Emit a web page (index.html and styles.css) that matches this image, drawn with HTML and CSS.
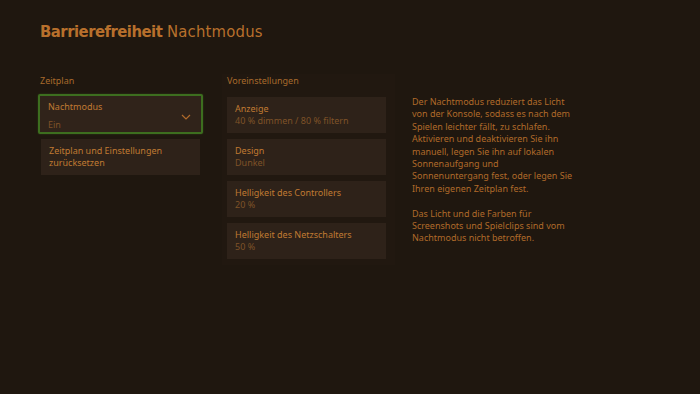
FILE: index.html
```html
<!DOCTYPE html>
<html lang="de">
<head>
<meta charset="utf-8">
<link rel="stylesheet" href="styles.css">
</head>
<body>
<div class="page">
  <h1 class="title"><span class="strong">Barrierefreiheit</span> <span class="light">Nachtmodus</span></h1>
  <div class="columns">
    <section class="col col-left">
      <div class="label">Zeitplan</div>
      <div class="dropdown">
        <div class="texts">
          <div class="item-title">Nachtmodus</div>
          <div class="item-sub">Ein</div>
        </div>
        <svg class="chev" width="10" height="6" viewBox="0 0 10 6"><path d="M1 1 L5 5 L9 1" fill="none" stroke="#b06a2a" stroke-width="1.2"/></svg>
      </div>
      <div class="card card-left">
        <div class="item-title">Zeitplan und Einstellungen<br>zurücksetzen</div>
      </div>
    </section>
    <section class="col col-mid">
      <div class="label">Voreinstellungen</div>
      <div class="panel">
        <div class="card"><div class="item-title">Anzeige</div><div class="item-sub">40 % dimmen / 80 % filtern</div></div>
        <div class="card"><div class="item-title">Design</div><div class="item-sub">Dunkel</div></div>
        <div class="card"><div class="item-title">Helligkeit des Controllers</div><div class="item-sub">20 %</div></div>
        <div class="card"><div class="item-title">Helligkeit des Netzschalters</div><div class="item-sub">50 %</div></div>
      </div>
    </section>
    <section class="col col-right">
      <p>Der Nachtmodus reduziert das Licht von der Konsole, sodass es nach dem Spielen leichter fällt, zu schlafen. Aktivieren und deaktivieren Sie ihn manuell, legen Sie ihn auf lokalen Sonnenaufgang und Sonnenuntergang fest, oder legen Sie Ihren eigenen Zeitplan fest.</p>
      <p>Das Licht und die Farben für Screenshots und Spielclips sind vom Nachtmodus nicht betroffen.</p>
    </section>
  </div>
</div>
</body>
</html>
```
FILE: styles.css
```css
html, body {
  margin: 0;
  padding: 0;
  background: #1f170f;
  width: 700px;
  height: 394px;
  overflow: hidden;
}
.page {
  padding: 20px 0 0 40px;
  font-family: "Noto Sans", "Open Sans", sans-serif;
  color: #b06a2a;
}
.title {
  margin: 0;
  font-family: "DejaVu Sans Condensed", "DejaVu Sans", sans-serif;
  font-size: 16.5px;
  font-weight: normal;
  line-height: 24px;
  color: #b8702c;
}
.title .strong { font-weight: bold; letter-spacing: -0.5px; }
.title .light { letter-spacing: 0.2px; }
.columns {
  display: flex;
  margin-top: 30px;
}
.col-left {
  width: 165px;
  margin-left: -2px;
}
.label {
  font-size: 9px;
  line-height: 14px;
  color: #a86a2c;
  padding-left: 2px;
  margin-bottom: 6px;
}
.dropdown {
  border: 2px solid #3d6e1f;
  border-radius: 2px;
  background: #30231a;
  display: flex;
  align-items: flex-start;
  justify-content: space-between;
  padding: 5px 10px 0 8px;
  box-sizing: content-box;
  height: 31px;
  box-shadow: 0 0 2px rgba(80,140,40,0.4);
}
.texts { display: flex; flex-direction: column; }
.item-title {
  font-size: 9px;
  line-height: 12px;
  color: #c07a32;
}
.item-sub {
  font-size: 9px;
  line-height: 12px;
  color: #7f5228;
}
.dropdown .item-sub { margin-top: 6px; }
.chev { margin-top: 13px; }
.card {
  background: #2e2219;
  height: 36px;
  box-sizing: border-box;
  padding: 6px 8px 0;
  display: flex;
  flex-direction: column;
}
.card-left {
  margin: 5px 3px 0;
  padding-top: 6px;
}
.col-mid {
  margin-left: 19px;
  width: 173px;
  background: #211810;
}
.col-mid .label { padding-left: 5px; }
.panel {
  display: flex;
  flex-direction: column;
  gap: 6px;
  padding: 3px 9px 6px 5px;
}
.col-right {
  margin-left: 17px;
  width: 163px;
  padding-top: 22px;
}
.col-right p {
  margin: 0 0 12.4px;
  font-size: 9px;
  line-height: 12.4px;
  color: #b06a2a;
}
```
